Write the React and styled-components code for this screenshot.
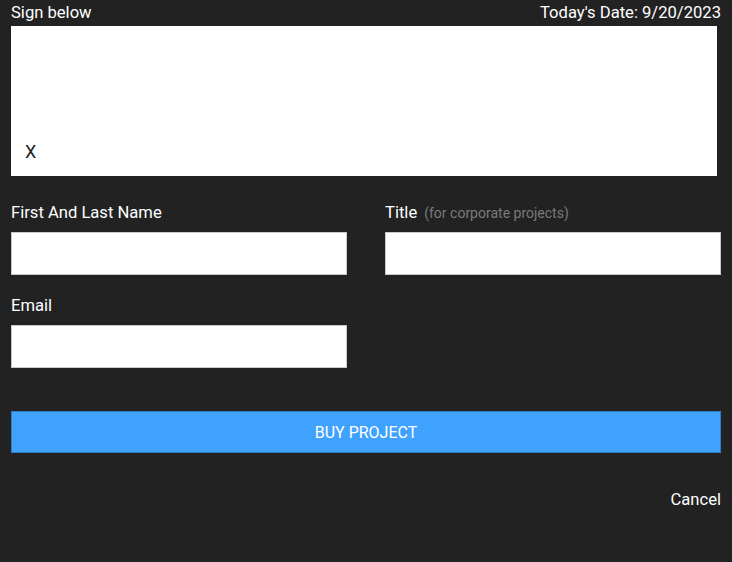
import React from 'react';
import styled, { createGlobalStyle } from 'styled-components';

const GlobalStyle = createGlobalStyle`
  html, body {
    margin: 0;
    padding: 0;
    background: #222222;
  }
  body {
    font-family: Roboto, "Noto Sans", "Liberation Sans", sans-serif;
    color: #ffffff;
  }
`;

const Page = styled.div`
  width: 732px;
  height: 562px;
  box-sizing: border-box;
  padding: 0 11px;
  background: #222222;
`;

const Header = styled.div`
  display: flex;
  justify-content: space-between;
  align-items: center;
  height: 26px;
  font-size: 16.6px;
  line-height: 24px;
`;

const SignPad = styled.div`
  height: 150px;
  margin-right: 4px;
  background: #ffffff;
  display: flex;
  align-items: flex-end;
  padding: 0 0 12px 14px;
  box-sizing: border-box;
  color: #222222;
  font-size: 18px;
  line-height: 24px;
`;

const Fields = styled.div`
  display: grid;
  grid-template-columns: 1fr 1fr;
  column-gap: 38px;
  row-gap: 18px;
  margin-top: 24px;
`;

const Field = styled.div`
  display: flex;
  flex-direction: column;
  gap: 8px;
`;

const Label = styled.label`
  display: flex;
  align-items: baseline;
  height: 24px;
  box-sizing: border-box;
  padding-top: 1px;
  font-size: 16.6px;
  line-height: 23px;
  color: #ffffff;
`;

const Hint = styled.span`
  margin-left: 7px;
  font-size: 14px;
  line-height: 23px;
  color: #7a7a7a;
`;

const Input = styled.input`
  height: 43px;
  box-sizing: border-box;
  border: 1px solid #c8c8c8;
  background: #ffffff;
  margin: 0;
  padding: 0 10px;
  font-size: 15px;
  font-family: inherit;
  outline: none;
`;

const BuyButton = styled.button`
  display: block;
  width: 100%;
  height: 42px;
  margin-top: 43px;
  background: #40a2ff;
  border: 1px solid #2e7dc6;
  color: #ffffff;
  font-family: inherit;
  font-size: 16px;
  cursor: pointer;
`;

const Footer = styled.div`
  display: flex;
  justify-content: flex-end;
  margin-top: 35px;
`;

const CancelLink = styled.a`
  font-size: 16.6px;
  line-height: 24px;
  color: #ffffff;
  cursor: pointer;
`;

export default function App() {
  return (
    <>
      <GlobalStyle />
      <Page>
        <Header>
          <span>Sign below</span>
          <span>Today's Date: 9/20/2023</span>
        </Header>
        <SignPad>X</SignPad>
        <Fields>
          <Field>
            <Label>First And Last Name</Label>
            <Input type="text" />
          </Field>
          <Field>
            <Label>
              Title<Hint>(for corporate projects)</Hint>
            </Label>
            <Input type="text" />
          </Field>
          <Field>
            <Label>Email</Label>
            <Input type="email" />
          </Field>
        </Fields>
        <BuyButton>BUY PROJECT</BuyButton>
        <Footer>
          <CancelLink>Cancel</CancelLink>
        </Footer>
      </Page>
    </>
  );
}
